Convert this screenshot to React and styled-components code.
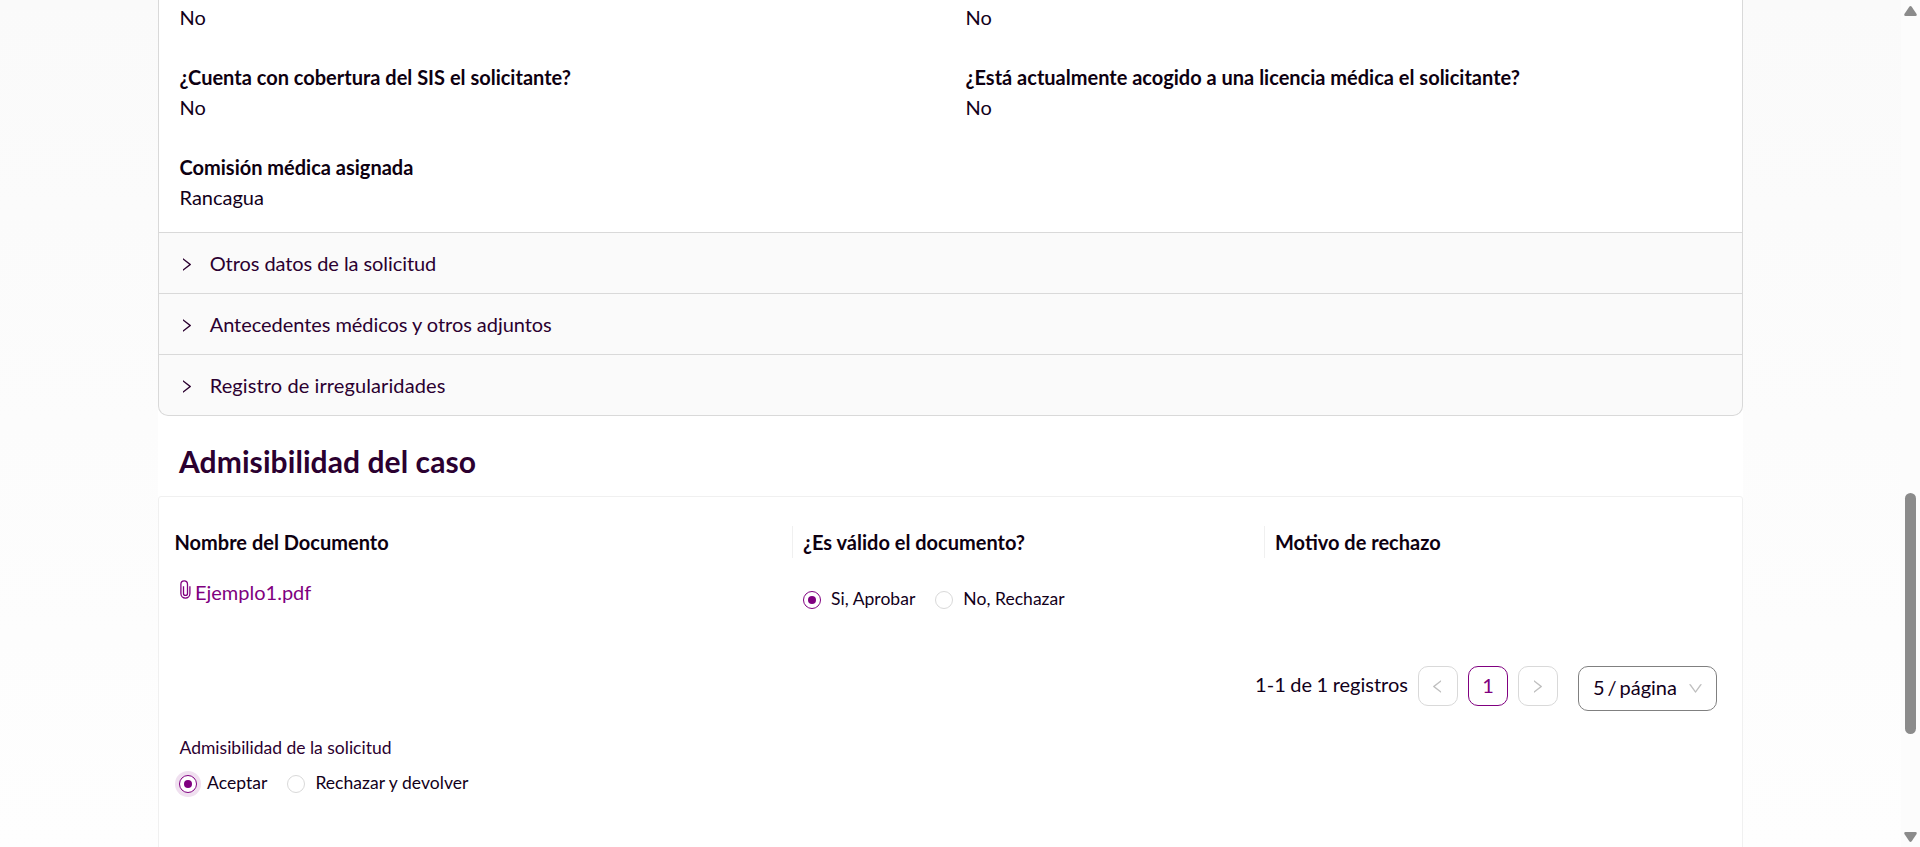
import React from "react";
import styled, { createGlobalStyle } from "styled-components";

const GlobalStyle = createGlobalStyle`
  * { box-sizing: border-box; }
  body { margin: 0; background: #fbfbfb; overflow: hidden; }
`;

const Page = styled.div`
  display: flex;
  height: 847px;
  overflow: hidden;
  font-family: Lato, "Liberation Sans", sans-serif;
  font-size: 20px;
  line-height: 30px;
  color: #12001a;
  background: linear-gradient(#fafafa, #fefefe);
`;

const Content = styled.main`
  flex: 1;
  padding: 0 158px;
`;

const Sheet = styled.div`
  height: 847px;
  background: #fff;
`;

const Collapse = styled.section`
  border: 1px solid #d9d9d9;
  border-top: 0;
  border-radius: 0 0 10px 10px;
  background: #fafafa;
  overflow: hidden;
`;

const PanelBody = styled.div`
  display: grid;
  grid-template-columns: 786px 1fr;
  align-content: start;
  row-gap: 30px;
  height: 232px;
  padding: 2px 0 0 20.5px;
  background: #fff;
`;

const Field = styled.div`
  display: flex;
  flex-direction: column;
`;

const Label = styled.span`
  font-weight: 700;
  color: #0e0010;
`;

const PanelHeader = styled.div`
  display: flex;
  align-items: center;
  gap: 15.7px;
  height: 61px;
  padding: 0 20px 1px;
  border-top: 1px solid #d9d9d9;
  color: #2b0030;
  letter-spacing: ${(p) => p.$tracking}px;
  svg { margin-top: 3px; }
`;

const Title = styled.h2`
  margin: 0;
  height: 80px;
  padding: 27px 0 0 21px;
  font-size: 30px;
  line-height: 36px;
  font-weight: 700;
  letter-spacing: 0.08px;
  color: #2b0030;
`;

const Card = styled.section`
  height: 400px;
  border: 1px solid #f0f0f0;
  border-radius: 3px 3px 0 0;
  padding-top: 29px;
`;

const Columns = styled.div`
  display: grid;
  grid-template-columns: 633px 472px 1fr;
  height: ${(p) => p.$height}px;
`;

const HeadCell = styled.div`
  border-left: 1px solid ${(p) => (p.$first ? "transparent" : "#f0f0f0")};
  padding-left: ${(p) => (p.$first ? 14.5 : 10)}px;
  line-height: 32px;
  font-weight: 700;
  color: #0e0010;
`;

const Cell = styled.div`
  padding: ${(p) => p.$pad};
`;

const FileLink = styled.a`
  display: flex;
  gap: 4px;
  color: #800080;
  svg { margin-top: 3px; }
`;

const Radios = styled.div`
  display: flex;
  gap: 20px;
`;

const RadioLabel = styled.label`
  display: flex;
  align-items: center;
  gap: 10px;
  font-size: 17.5px;
  line-height: 22px;
  letter-spacing: 0.04px;
  white-space: nowrap;
`;

const RadioMark = styled.span`
  display: flex;
  align-items: center;
  justify-content: center;
  width: 18px;
  height: 18px;
  margin-top: 2px;
  border: 1px solid ${(p) => (p.$on ? "#800080" : "#d9d9d9")};
  border-radius: 50%;
  background: #fff;
  box-shadow: ${(p) => (p.$focus ? "0 0 0 4px #f0e0f0" : "none")};
  &::after {
    content: "";
    width: 8px;
    height: 8px;
    border-radius: 50%;
    background: ${(p) => (p.$on ? "#800080" : "transparent")};
  }
`;

const Pagination = styled.div`
  display: flex;
  justify-content: flex-end;
  gap: 10px;
  height: 45px;
  padding-right: 25px;
`;

const Total = styled.span`
  line-height: 36px;
  word-spacing: -0.6px;
`;

const PageButton = styled.button`
  display: flex;
  align-items: center;
  justify-content: center;
  width: 40px;
  height: 40px;
  padding: 0 0 2px;
  border: 1px solid ${(p) => (p.$active ? "#800080" : "#d9d9d9")};
  border-radius: 10px;
  background: #fff;
  font: inherit;
  color: ${(p) => (p.$active ? "#800080" : "#bfbfbf")};
  svg { margin: 2px 1px 0 0; }
`;

const SizeSelect = styled.div`
  display: flex;
  align-items: center;
  justify-content: space-between;
  width: 139px;
  height: 45px;
  margin-left: 10px;
  padding: 0 13px 3px 14px;
  border: 1px solid #808080;
  border-radius: 10px;
  word-spacing: -2.2px;
  svg { color: #bfbfbf; margin-top: 3px; }
`;

const FormItem = styled.div`
  padding: 25px 0 0 20px;
`;

const FormLabel = styled.div`
  margin-bottom: 12px;
  padding-left: 0.5px;
  font-size: 17.5px;
  line-height: 24px;
  color: #2b0030;
`;

const Scrollbar = styled.aside`
  display: flex;
  flex-direction: column;
  align-items: center;
  width: 19px;
  padding: 6px 0 5px;
  background: #fcfcfc;
  color: #8b8b8b;
`;

const Thumb = styled.div`
  width: 11px;
  height: 241px;
  margin: 477px 0 auto;
  border-radius: 6px;
  background: #8b8b8b;
`;

const arrows = {
  right: "M765.7 486.8L314.9 134.7A7.97 7.97 0 00302 141v77.3c0 4.9 2.3 9.6 6.1 12.6l360 281.1-360 281.1c-3.9 3-6.1 7.7-6.1 12.6V883c0 6.7 7.7 10.4 12.9 6.3l450.8-352.1a31.96 31.96 0 000-50.4z",
  left: "M724 218.3V141c0-6.7-7.7-10.4-12.9-6.3L260.3 486.8a31.86 31.86 0 000 50.3l450.8 352.1c5.3 4.1 12.9.4 12.9-6.3v-77.3c0-4.9-2.3-9.6-6.1-12.6l-360-281 360-281.1c3.8-3 6.1-7.7 6.1-12.6z",
  down: "M884 256h-75c-5.1 0-9.9 2.5-12.9 6.6L512 654.2 227.9 262.6c-3-4.1-7.8-6.6-12.9-6.6h-75c-6.5 0-10.3 7.4-6.5 12.7l352.6 486.1c12.8 17.6 39 17.6 51.7 0l352.6-486.1c3.9-5.3.1-12.7-6.4-12.7z",
};

const Arrow = ({ dir, size = 15 }) => (
  <svg width={size} height={size} viewBox="64 64 896 896" fill="currentColor">
    <path d={arrows[dir]} />
  </svg>
);

const Clip = () => (
  <svg width="11" height="19" viewBox="0 0 11 19" fill="none" stroke="currentColor" strokeWidth="1.3">
    <path d="M9.9 6.2V13.6a4.5 4.5 0 0 1-9 0V4.2a3.3 3.3 0 0 1 6.6 0V13.4a2 2 0 0 1-4 0V6.2" />
  </svg>
);

const Radio = ({ on, focus, children }) => (
  <RadioLabel>
    <RadioMark $on={on} $focus={focus} />
    {children}
  </RadioLabel>
);

const fields = [
  [null, "No"],
  [null, "No"],
  ["¿Cuenta con cobertura del SIS el solicitante?", "No"],
  ["¿Está actualmente acogido a una licencia médica el solicitante?", "No"],
  ["Comisión médica asignada", "Rancagua"],
];

const panels = [
  { name: "Otros datos de la solicitud", tracking: -0.07 },
  { name: "Antecedentes médicos y otros adjuntos", tracking: -0.05 },
  { name: "Registro de irregularidades", tracking: 0.1 },
];

export default function App() {
  return (
    <>
      <GlobalStyle />
      <Page>
        <Content>
          <Sheet>
            <Collapse>
              <PanelBody>
                {fields.map(([label, value], i) => (
                  <Field key={i}>
                    {label && <Label>{label}</Label>}
                    <span>{value}</span>
                  </Field>
                ))}
              </PanelBody>
              {panels.map(({ name, tracking }) => (
                <PanelHeader key={name} $tracking={tracking}>
                  <Arrow dir="right" />
                  {name}
                </PanelHeader>
              ))}
            </Collapse>
            <Title>Admisibilidad del caso</Title>
            <Card>
              <Columns $height={32}>
                <HeadCell $first>Nombre del Documento</HeadCell>
                <HeadCell>¿Es válido el documento?</HeadCell>
                <HeadCell>Motivo de rechazo</HeadCell>
              </Columns>
              <Columns $height={108}>
                <Cell $pad="19px 0 0 21px">
                  <FileLink>
                    <Clip />
                    Ejemplo1.pdf
                  </FileLink>
                </Cell>
                <Cell $pad="30px 0 0 11px">
                  <Radios>
                    <Radio on>Si, Aprobar</Radio>
                    <Radio>No, Rechazar</Radio>
                  </Radios>
                </Cell>
              </Columns>
              <Pagination>
                <Total>1-1 de 1 registros</Total>
                <PageButton><Arrow dir="left" /></PageButton>
                <PageButton $active>1</PageButton>
                <PageButton><Arrow dir="right" /></PageButton>
                <SizeSelect>
                  5 / página
                  <Arrow dir="down" />
                </SizeSelect>
              </Pagination>
              <FormItem>
                <FormLabel>Admisibilidad de la solicitud</FormLabel>
                <Radios>
                  <Radio on focus>Aceptar</Radio>
                  <Radio>Rechazar y devolver</Radio>
                </Radios>
              </FormItem>
            </Card>
          </Sheet>
        </Content>
        <Scrollbar>
          <svg width="13" height="10" viewBox="0 0 13 10" fill="currentColor">
            <path d="M5.3 .7Q6.5-.6 7.7.7L12.6 8Q13.2 10 11.5 10H1.5Q-.2 10 .4 8Z" />
          </svg>
          <Thumb />
          <svg width="13" height="10" viewBox="0 0 13 10" fill="currentColor">
            <path d="M5.3 9.3Q6.5 10.6 7.7 9.3L12.6 2Q13.2 0 11.5 0H1.5Q-.2 0 .4 2Z" />
          </svg>
        </Scrollbar>
      </Page>
    </>
  );
}
